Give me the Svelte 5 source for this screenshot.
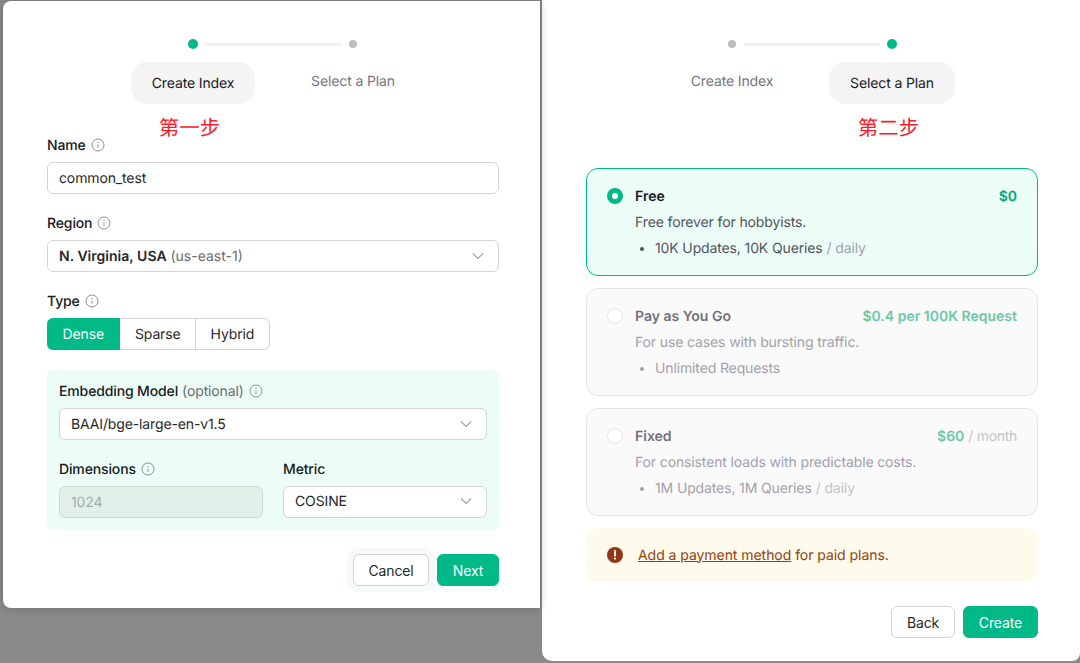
<script>
  const plans = [
    { name: "Free", price: "$0", unit: "", desc: "Free forever for hobbyists.", item: "10K Updates, 10K Queries", per: "/ daily", selected: true },
    { name: "Pay as You Go", price: "$0.4 per 100K Request", unit: "", desc: "For use cases with bursting traffic.", item: "Unlimited Requests", per: "", selected: false },
    { name: "Fixed", price: "$60", unit: "/ month", desc: "For consistent loads with predictable costs.", item: "1M Updates, 1M Queries", per: "/ daily", selected: false },
  ];
  const types = ["Dense", "Sparse", "Hybrid"];
</script>

{#snippet info()}
  <svg class="info" width="14" height="14" viewBox="0 0 14 14" fill="none">
    <circle cx="7" cy="7" r="6" stroke="#8f8f8f" />
    <path d="M7 6.4v3.4" stroke="#8f8f8f" />
    <circle cx="7" cy="4.4" r="0.7" fill="#8f8f8f" />
  </svg>
{/snippet}

{#snippet chevron()}
  <svg class="chevron" width="12" height="8" viewBox="0 0 12 8" fill="none">
    <path d="M1 1.5l5 5 5-5" stroke="#a3a3ab" stroke-width="1.2" />
  </svg>
{/snippet}

{#snippet steps(active, note)}
  <div class="track">
    <span class="dot" class:on={active === 0}></span>
    <span class="line"></span>
    <span class="dot" class:on={active === 1}></span>
  </div>
  <div class="steps">
    {#each ["Create Index", "Select a Plan"] as label, i}
      <div class="step">
        <span class="pill" class:current={active === i}>{label}</span>
        {#if active === i}<span class="note">{note}</span>{/if}
      </div>
    {/each}
  </div>
{/snippet}

<main>
  <section class="panel left">
    {@render steps(0, "第一步")}

    <label class="label">Name {@render info()}</label>
    <div class="field">common_test</div>

    <label class="label region">Region {@render info()}</label>
    <div class="field select"><span><b>N. Virginia, USA</b> <i>(us-east-1)</i></span>{@render chevron()}</div>

    <label class="label type">Type {@render info()}</label>
    <div class="segments">
      {#each types as t, i}
        <span class="segment" class:on={i === 0}>{t}</span>
      {/each}
    </div>

    <div class="embedding">
      <label class="label">Embedding Model <i>(optional)</i> {@render info()}</label>
      <div class="field select"><span>BAAI/bge-large-en-v1.5</span>{@render chevron()}</div>
      <div class="columns">
        <div>
          <label class="label">Dimensions {@render info()}</label>
          <div class="field disabled">1024</div>
        </div>
        <div>
          <label class="label">Metric</label>
          <div class="field select"><span>COSINE</span>{@render chevron()}</div>
        </div>
      </div>
    </div>

    <div class="actions">
      <button class="btn focused">Cancel</button>
      <button class="btn primary next">Next</button>
    </div>
  </section>

  <section class="panel right">
    {@render steps(1, "第二步")}

    <div class="plans">
      {#each plans as plan}
        <div class="plan" class:selected={plan.selected}>
          <span class="radio"></span>
          <div class="body">
            <div class="head">
              <span class="name">{plan.name}</span>
              <span class="price">{plan.price}{#if plan.unit}<em>{plan.unit}</em>{/if}</span>
            </div>
            <div class="desc">{plan.desc}</div>
            <ul>
              <li>{plan.item}{#if plan.per}<em>{plan.per}</em>{/if}</li>
            </ul>
          </div>
        </div>
      {/each}
      <div class="alert">
        <svg width="16" height="16" viewBox="0 0 16 16">
          <circle cx="8" cy="8" r="8" fill="#92361a" />
          <path d="M8 3.6v5.2" stroke="#fefaec" stroke-width="1.8" stroke-linecap="round" />
          <circle cx="8" cy="11.6" r="1.1" fill="#fefaec" />
        </svg>
        <span><a href="#payment">Add a payment method</a> for paid plans.</span>
      </div>
    </div>

    <div class="actions">
      <button class="btn">Back</button>
      <button class="btn primary create">Create</button>
    </div>
  </section>
</main>

<style>
  :global(body) {
    background: #8a8a8a;
    font-family: Inter, "Liberation Sans", "Noto Sans CJK SC", sans-serif;
    font-size: 14px;
    letter-spacing: -0.13px;
    color: #18181b;
    text-rendering: geometricPrecision;
  }

  main {
    display: flex;
    align-items: flex-start;
    height: 663px;
    overflow: hidden;
  }

  .panel {
    box-sizing: border-box;
    background: #fff;
    padding-top: 38px;
  }

  .left {
    position: relative;
    z-index: 1;
    width: 537px;
    height: 607px;
    margin: 1px 0 0 3px;
    padding-left: 44px;
    padding-right: 41px;
    padding-top: 37px;
    border-radius: 8px 0 0 8px;
    box-shadow: 0 0 10px rgba(0, 0, 0, 0.22);
  }

  .right {
    width: 538px;
    height: 661px;
    margin-left: 2px;
    padding-left: 44px;
    padding-right: 42px;
    border-radius: 0 0 8px 8px;
    border-bottom-left-radius: 10px;
  }

  .track {
    display: flex;
    align-items: center;
    justify-content: center;
    height: 12px;
    margin-bottom: 12px;
  }

  .dot {
    width: 8px;
    height: 8px;
    margin: 0 8px;
    border-radius: 50%;
    background: #bdbdbd;
  }

  .dot.on {
    width: 10px;
    height: 10px;
    margin: 0 7px;
    background: #00b987;
  }

  .line {
    width: 136px;
    height: 3px;
    background: #f0f0f0;
  }

  .steps {
    display: grid;
    grid-template-columns: 160px 160px;
    justify-content: center;
  }

  .step {
    display: flex;
    flex-direction: column;
    align-items: center;
  }

  .pill {
    padding: 9px 0 7px;
    line-height: 22px;
    color: #75757d;
    white-space: nowrap;
  }

  .pill.current {
    padding: 11px 0 9px;
    width: 124px;
    border-radius: 16px;
    background: #f4f4f5;
    color: #18181b;
    text-align: center;
  }

  .right .pill.current {
    width: 126px;
  }

  .note {
    height: 21px;
    margin: 12px 7px 0 0;
    font-family: "Noto Sans CJK SC", sans-serif;
    font-size: 20.5px;
    line-height: 20px;
    letter-spacing: 0;
    color: #f5222d;
  }

  .label {
    display: flex;
    align-items: center;
    gap: 5px;
    box-sizing: border-box;
    height: 16px;
    padding-top: 2px;
    margin-bottom: 9px;
    font-weight: 500;
    line-height: 16px;
  }

  .label i,
  .field i {
    font-style: normal;
    font-weight: 400;
    color: #6b6b73;
  }

  .label i {
    margin-left: -1px;
  }

  .info {
    flex: none;
    margin-top: -2px;
  }

  .field {
    display: flex;
    align-items: center;
    justify-content: space-between;
    box-sizing: border-box;
    height: 32px;
    padding: 0 11px;
    border: 1px solid #d4d4d8;
    border-radius: 6px;
    background: #fff;
    color: #27272a;
  }

  .field b {
    font-weight: 600;
    letter-spacing: 0.02px;
  }

  .field i {
    letter-spacing: 0;
  }

  .chevron {
    margin-right: 3px;
  }

  .columns .select {
    padding-bottom: 2px;
  }

  .disabled {
    border-color: #cfd9d5;
    background: #e1f1ea;
    color: #a5adab;
  }

  .region {
    margin-top: 21px;
  }

  .type {
    margin-top: 21px;
  }

  .segments {
    display: flex;
    width: fit-content;
    margin-bottom: 20px;
  }

  .segment {
    box-sizing: border-box;
    height: 32px;
    padding: 0 14.5px;
    border: 1px solid #d4d4d8;
    border-left-width: 0;
    line-height: 31px;
    color: #27272a;
  }

  .segment.on {
    padding: 0 15.5px;
    border-color: #00b987;
    border-radius: 6px 0 0 6px;
    background: #00b987;
    color: #fff;
  }

  .segment:last-child {
    border-radius: 0 6px 6px 0;
  }

  .embedding {
    padding: 13px 12px 12px;
    border-radius: 6px;
    background: #ecfdf7;
  }

  .columns {
    display: grid;
    grid-template-columns: 204px 204px;
    justify-content: space-between;
    margin-top: 21px;
  }

  .actions {
    display: flex;
    justify-content: flex-end;
    gap: 8px;
    margin-top: 24px;
  }

  .btn {
    height: 32px;
    padding: 0;
    border: 1px solid #d4d4d8;
    border-radius: 6px;
    background: #fff;
    font: inherit;
    letter-spacing: inherit;
    color: #27272a;
  }

  .btn.focused {
    width: 76px;
    box-shadow: 0 0 0 6px #f5f9f9;
  }

  .right .btn {
    width: 64px;
  }

  .btn.primary {
    border-color: #00b987;
    background: #00b987;
    color: #fff;
  }

  .btn.next {
    width: 62px;
  }

  .right .btn.create {
    width: 75px;
  }

  .plans {
    display: flex;
    flex-direction: column;
    gap: 12px;
    margin-top: 31px;
  }

  .plan {
    display: flex;
    gap: 12px;
    box-sizing: border-box;
    height: 108px;
    padding: 15px 20px 13px;
    border: 1px solid #e6e6e8;
    border-radius: 12px;
    background: #fafafa;
    line-height: 26px;
    color: #a1a1aa;
  }

  .plan.selected {
    border-color: #00b987;
    background: #ecfdf7;
    color: #52525b;
  }

  .radio {
    flex: none;
    box-sizing: border-box;
    width: 16px;
    height: 16px;
    margin-top: 4px;
    border: 1px solid #e4e4e7;
    border-radius: 50%;
    background: #fff;
  }

  .selected .radio {
    border: 5px solid #00b987;
  }

  .body {
    flex: 1;
  }

  .head {
    display: flex;
    justify-content: space-between;
    font-weight: 600;
    letter-spacing: 0;
  }

  .name {
    color: #71717a;
  }

  .selected .name {
    color: #18181b;
  }

  .price {
    color: #6cc7a7;
  }

  .selected .price {
    color: #00a878;
  }

  .price em,
  li em {
    margin-left: 4px;
    font-style: normal;
    font-weight: 400;
    letter-spacing: -0.13px;
    color: #c4c4c8;
  }

  .price em {
    letter-spacing: -0.3px;
  }

  .selected li em {
    color: #a1a1aa;
  }

  ul {
    margin: 0;
    padding-left: 20px;
  }

  .alert {
    display: flex;
    align-items: center;
    gap: 15px;
    height: 54px;
    padding: 0 21px;
    border-radius: 12px;
    background: #fefaec;
    letter-spacing: -0.05px;
    color: #92400e;
  }

  .alert a {
    color: inherit;
  }
</style>
